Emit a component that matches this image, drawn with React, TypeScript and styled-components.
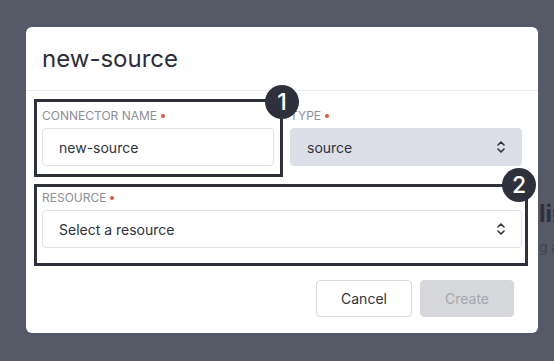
import React from "react";
import styled, { createGlobalStyle } from "styled-components";

const GlobalStyle = createGlobalStyle`
  html, body { margin: 0; padding: 0; }
  body {
    font-family: Inter, "Noto Sans", "Liberation Sans", sans-serif;
    background: #565a66;
    width: 554px;
    height: 361px;
    overflow: hidden;
  }
  * { box-sizing: border-box; }
`;

const Page = styled.div`
  width: 554px;
  height: 361px;
  padding: 198px 0 0 539px;
  background: #565a66;
  white-space: nowrap;
  overflow: hidden;
`;

const PageHeading = styled.div`
  font-size: 24px;
  line-height: 32px;
  font-weight: 700;
  color: #2e3139;
`;

const PageText = styled.div`
  margin-top: 7px;
  font-size: 14px;
  line-height: 20px;
  color: #42454f;
`;

const Overlay = styled.div`
  position: fixed;
  inset: 0;
  padding: 27px 0 0 26px;
`;

const Dialog = styled.div`
  position: relative;
  width: 512px;
  background: #ffffff;
  border-radius: 6px;
`;

const Header = styled.div`
  height: 64px;
  padding: 0 16px;
  display: flex;
  align-items: center;
  border-bottom: 1px solid #e7e8eb;
`;

const Title = styled.h2`
  margin: 0;
  font-size: 24px;
  font-weight: 400;
  color: #2b2e38;
`;

const Body = styled.div`
  padding: 17px 16px 0;
  display: flex;
  flex-direction: column;
  gap: 24px;
`;

const Row = styled.div`
  display: grid;
  grid-template-columns: 1fr 1fr;
  gap: 16px;
`;

const Field = styled.div`
  display: flex;
  flex-direction: column;
  gap: 4px;
`;

const Label = styled.div`
  display: flex;
  align-items: center;
  gap: 4px;
  height: 16px;
  font-size: 12px;
  line-height: 16px;
  color: #8c8f97;
  text-transform: uppercase;
`;

const Required = styled.span`
  width: 4px;
  height: 4px;
  border-radius: 50%;
  background: #e2553d;
  margin-top: -1px;
`;

const Control = styled.div<{ $filled?: boolean }>`
  height: 38px;
  display: flex;
  align-items: center;
  justify-content: space-between;
  padding: 0 16px;
  border-radius: 4px;
  border: 1px solid ${(p) => (p.$filled ? "#dcdfe7" : "#e0e2e7")};
  background: ${(p) => (p.$filled ? "#dcdfe7" : "#ffffff")};
  font-size: 14px;
  color: #2f323c;
`;

const Footer = styled.div`
  display: flex;
  justify-content: flex-end;
  gap: 8px;
  padding: 32px 24px 16px;
`;

const Button = styled.button<{ $disabled?: boolean }>`
  width: ${(p) => (p.$disabled ? "94px" : "96px")};
  height: 37px;
  border-radius: 4px;
  font-family: inherit;
  font-size: 14px;
  border: 1px solid ${(p) => (p.$disabled ? "#d6d7da" : "#d8dadf")};
  background: ${(p) => (p.$disabled ? "#d6d7da" : "#ffffff")};
  color: ${(p) => (p.$disabled ? "#a5a7ad" : "#30333b")};
`;

const Annotation = styled.div<{ $left: number; $top: number; $w: number; $h: number }>`
  position: absolute;
  left: ${(p) => p.$left}px;
  top: ${(p) => p.$top}px;
  width: ${(p) => p.$w}px;
  height: ${(p) => p.$h}px;
  border: 3px solid #2e313b;
  pointer-events: none;
`;

const Badge = styled.div<{ $left: number; $top: number }>`
  position: absolute;
  left: ${(p) => p.$left}px;
  top: ${(p) => p.$top}px;
  width: 34px;
  height: 34px;
  border-radius: 50%;
  background: #2e313b;
  color: #ffffff;
  font-size: 23px;
  font-weight: 500;
  display: flex;
  align-items: center;
  justify-content: center;
`;

const UpDown = () => (
  <svg width="8" height="14" viewBox="0 0 8 14" fill="none">
    <polyline points="1,5 4,2 7,5" stroke="#30333b" strokeWidth="1.6" strokeLinecap="round" strokeLinejoin="round" />
    <polyline points="1,9 4,12 7,9" stroke="#30333b" strokeWidth="1.6" strokeLinecap="round" strokeLinejoin="round" />
  </svg>
);

export default function App() {
  return (
    <>
      <GlobalStyle />
      <Page>
        <PageHeading>lines</PageHeading>
        <PageText>g a connector</PageText>
      </Page>
      <Overlay>
        <Dialog>
          <Header>
            <Title>new-source</Title>
          </Header>
          <Body>
            <Row>
              <Field>
                <Label>
                  Connector name <Required />
                </Label>
                <Control>new-source</Control>
              </Field>
              <Field>
                <Label>
                  Type <Required />
                </Label>
                <Control $filled>
                  source
                  <UpDown />
                </Control>
              </Field>
            </Row>
            <Field>
              <Label>
                Resource <Required />
              </Label>
              <Control>
                Select a resource
                <UpDown />
              </Control>
            </Field>
          </Body>
          <Footer>
            <Button>Cancel</Button>
            <Button $disabled>Create</Button>
          </Footer>
          <Annotation $left={8} $top={72} $w={249} $h={78} />
          <Annotation $left={8} $top={157} $w={494} $h={82} />
          <Badge $left={239} $top={58}>1</Badge>
          <Badge $left={476} $top={141}>2</Badge>
        </Dialog>
      </Overlay>
    </>
  );
}
